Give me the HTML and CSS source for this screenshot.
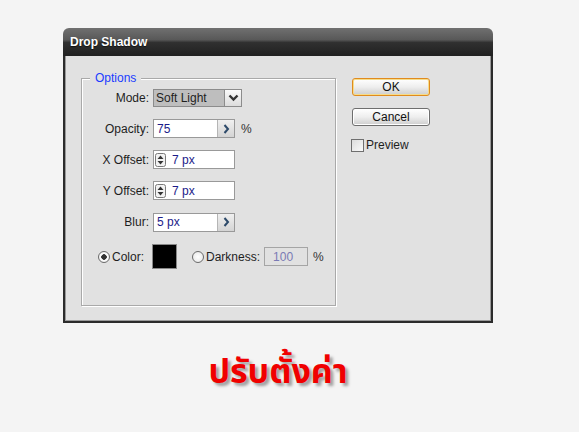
FILE: index.html
```html
<!DOCTYPE html>
<html lang="th">
<head>
    <meta charset="UTF-8">
    <title>Drop Shadow</title>
    <link rel="stylesheet" href="styles.css">
</head>
<body>
    <div class="dialog">
        <div class="titlebar">Drop Shadow</div>
        <div class="dialog-body">
            <div class="group">
                <span class="legend">Options</span>
                <div class="fields">
                    <label class="field-label">Mode:</label>
                    <div class="select">
                        <span class="select-value">Soft Light</span>
                        <span class="select-btn">
                            <svg width="11" height="8" viewBox="0 0 11 8"><path d="M1.5 1.5 L5.5 5.5 L9.5 1.5" fill="none" stroke="#333" stroke-width="2.4"/></svg>
                        </span>
                    </div>

                    <label class="field-label">Opacity:</label>
                    <div class="field-line">
                        <div class="input">
                            <span class="input-value">75</span>
                            <span class="arrow-btn">
                                <svg width="7" height="10" viewBox="0 0 7 10"><path d="M1.5 1 L5 5 L1.5 9" fill="none" stroke="#2d4a6a" stroke-width="2"/></svg>
                            </span>
                        </div>
                        <span class="unit">%</span>
                    </div>

                    <label class="field-label">X Offset:</label>
                    <div class="input">
                        <span class="spinner">
                            <svg width="11" height="14" viewBox="0 0 11 14"><rect x="0.5" y="0.5" width="10" height="13" rx="2" fill="#f2f2f2" stroke="#7a7a7a"/><path d="M2.5 6 L5.5 2.5 L8.5 6 Z M2.5 8 L5.5 11.5 L8.5 8 Z" fill="#333"/></svg>
                        </span>
                        <span class="input-value">7 px</span>
                    </div>

                    <label class="field-label">Y Offset:</label>
                    <div class="input">
                        <span class="spinner">
                            <svg width="11" height="14" viewBox="0 0 11 14"><rect x="0.5" y="0.5" width="10" height="13" rx="2" fill="#f2f2f2" stroke="#7a7a7a"/><path d="M2.5 6 L5.5 2.5 L8.5 6 Z M2.5 8 L5.5 11.5 L8.5 8 Z" fill="#333"/></svg>
                        </span>
                        <span class="input-value">7 px</span>
                    </div>

                    <label class="field-label">Blur:</label>
                    <div class="input">
                        <span class="input-value">5 px</span>
                        <span class="arrow-btn">
                            <svg width="7" height="10" viewBox="0 0 7 10"><path d="M1.5 1 L5 5 L1.5 9" fill="none" stroke="#2d4a6a" stroke-width="2"/></svg>
                        </span>
                    </div>
                </div>

                <div class="color-row">
                    <span class="radio checked"></span>
                    <span class="radio-label">Color:</span>
                    <span class="swatch"></span>
                    <span class="radio"></span>
                    <span class="radio-label">Darkness:</span>
                    <span class="input small disabled"><span class="input-value">100</span></span>
                    <span class="unit">%</span>
                </div>
            </div>

            <div class="actions">
                <button class="btn default">OK</button>
                <button class="btn">Cancel</button>
                <div class="check-line">
                    <span class="checkbox"></span>
                    <span>Preview</span>
                </div>
            </div>
        </div>
    </div>

    <p class="caption">ปรับตั้งค่า</p>
</body>
</html>
```

FILE: styles.css
```css
* {
    margin: 0;
    padding: 0;
    box-sizing: border-box;
}

body {
    font-family: Tahoma, 'Liberation Sans', 'DejaVu Sans', sans-serif;
    font-size: 12px;
    color: #1e1e1e;
    background-color: #f4f4f4;
    padding: 28px 0 0 63px;
}

.dialog {
    width: 430px;
}

.titlebar {
    height: 28px;
    padding-left: 7px;
    line-height: 29px;
    font-weight: bold;
    color: #fff;
    text-shadow: 0 1px 1px rgba(0, 0, 0, 0.6);
    border-radius: 6px 6px 0 0;
    background: linear-gradient(#707070, #585858 42%, #303030 52%, #202020);
}

.dialog-body {
    display: flex;
    gap: 16px;
    height: 267px;
    padding: 22px 0 0 16px;
    background-color: #e1e1e1;
    border: 2px solid #2b2b2b;
    border-top: none;
    box-shadow: inset 1px 0 0 #9a9a9a, inset -1px -1px 0 #9a9a9a;
}

.group {
    position: relative;
    width: 255px;
    height: 228px;
    border: 1px solid #a9a9a9;
    box-shadow: inset 1px 1px 0 #fff, 1px 1px 0 #fff;
    padding-top: 10px;
}

.legend {
    position: absolute;
    top: -8px;
    left: 8px;
    padding: 0 5px;
    color: #1a3cff;
    background-color: #e1e1e1;
}

.fields {
    display: grid;
    grid-template-columns: 67px auto;
    grid-template-rows: 18px 19px 19px 19px 20px;
    column-gap: 4px;
    row-gap: 12px;
    align-items: center;
}

.field-label {
    text-align: right;
}

.field-line {
    display: flex;
    align-items: center;
    gap: 6px;
}

.select {
    display: flex;
    width: 89px;
    height: 18px;
    border: 1px solid #8c8c8c;
}

.select-value {
    flex: 1;
    padding-left: 2px;
    line-height: 16px;
    background-color: #bebebe;
}

.select-btn {
    display: flex;
    align-items: center;
    justify-content: center;
    width: 17px;
    border-left: 1px solid #8c8c8c;
    background: linear-gradient(#fafafa, #dcdcdc);
}

.input {
    display: flex;
    align-items: center;
    width: 82px;
    height: 19px;
    border: 1px solid #999;
    background-color: #fff;
}

.input-value {
    flex: 1;
    padding-left: 3px;
    color: #1c1c8a;
}

.arrow-btn {
    display: flex;
    align-items: center;
    justify-content: center;
    width: 17px;
    height: 100%;
    border-left: 1px solid #b5b5b5;
    background: linear-gradient(#f0f0f0, #d4d4d4);
}

.spinner {
    display: flex;
    padding-left: 1px;
    margin-right: 3px;
}

.unit {
    color: #333;
}

.color-row {
    display: flex;
    align-items: center;
    height: 25px;
    margin-top: 12px;
    padding-left: 16px;
}

.radio {
    width: 12px;
    height: 12px;
    border: 1px solid #6a6a6a;
    border-radius: 50%;
    background: radial-gradient(#fff, #e4e4e4);
    margin-right: 2px;
}

.radio.checked {
    background: radial-gradient(circle, #333 0 2.5px, #fff 3px, #e6e6e6);
}

.radio-label {
    margin-right: 8px;
}

.swatch {
    width: 25px;
    height: 25px;
    background-color: #000;
    border: 1px solid #888;
    margin-right: 15px;
}

.input.small {
    width: 44px;
    margin-right: 5px;
    margin-left: -4px;
}

.input.disabled {
    background-color: #e1e1e1;
    border-color: #a5a5a5;
}

.input.disabled .input-value {
    padding-left: 8px;
    color: #7a7ab5;
}

.actions {
    display: flex;
    flex-direction: column;
    gap: 12px;
    width: 78px;
}

.btn {
    height: 18px;
    font: inherit;
    color: #111;
    border: 1px solid #6e6e6e;
    border-radius: 3px;
    background: linear-gradient(#ffffff, #eeeeee 50%, #cdcdcd);
    box-shadow: inset 0 0 0 1px #fff;
}

.btn.default {
    border-color: #e08b1e;
    box-shadow: inset 0 0 0 1px #f6dc8a;
}

.check-line {
    display: flex;
    align-items: center;
    gap: 2px;
    margin-left: -1px;
}

.checkbox {
    width: 13px;
    height: 13px;
    border: 1px solid #6f6f6f;
    background: linear-gradient(135deg, #dcdcdc, #fafafa);
}

.caption {
    width: 430px;
    margin-top: 24px;
    text-align: center;
    font-family: 'Noto Sans Thai', 'Loma', 'Garuda', 'Noto Sans', sans-serif;
    font-size: 34px;
    font-weight: bold;
    color: #f00000;
    text-shadow: 3px 3px 3px rgba(0, 0, 0, 0.35);
}
```
